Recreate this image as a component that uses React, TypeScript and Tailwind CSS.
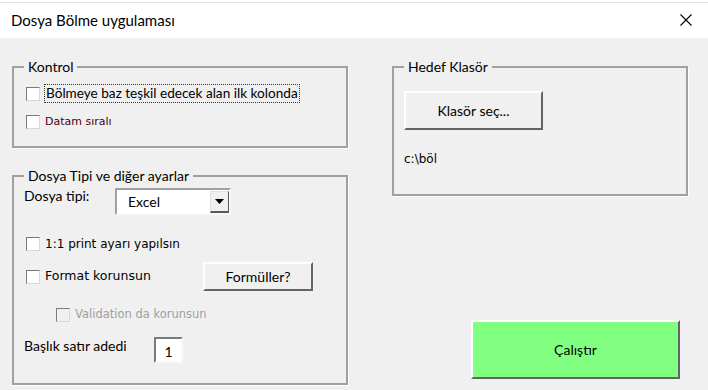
import { ReactNode } from "react";

const seg = { fontFamily: 'Lato, "Noto Sans", sans-serif' };
const tah = { fontFamily: '"DejaVu Sans", "Liberation Sans", sans-serif' };

function Check({
  children,
  disabled,
  className = "",
}: {
  children?: ReactNode;
  disabled?: boolean;
  className?: string;
}) {
  return (
    <label className={`flex items-center gap-[5px] ${className}`}>
      <span
        className={`w-[14px] h-[14px] shrink-0 border border-t-[#7a7a7a] border-l-[#7a7a7a] border-b-[#d8d8d8] border-r-[#d8d8d8] ${
          disabled ? "bg-[#f0f0f0]" : "bg-white"
        }`}
      ></span>
      {children}
    </label>
  );
}

function Frame({
  title,
  className = "",
  children,
}: {
  title: string;
  className?: string;
  children: ReactNode;
}) {
  return (
    <fieldset
      className={`border-2 border-[#a0a0a0] shadow-[1px_1px_0_#fff] pl-[10px] ${className}`}
    >
      <legend className="px-[4px] text-[14px] leading-[18px] text-black" style={seg}>
        {title}
      </legend>
      {children}
    </fieldset>
  );
}

export default function App() {
  return (
    <div className="w-[708px] h-[390px] bg-[#f0f0f0] overflow-hidden text-black">
      <div className="h-[3px] bg-white border-b border-[#e3e3e3]"></div>
      <div className="h-[35px] bg-white flex items-center justify-between pl-[11px] pr-[16px]">
        <span className="text-[15px] leading-none -mt-[1px]" style={seg}>
          Dosya Bölme uygulaması
        </span>
        <svg width="12" height="12" viewBox="0 0 12 12" className="mb-[1px]">
          <path d="M0.5 0.5L11.5 11.5M11.5 0.5L0.5 11.5" stroke="#000" strokeWidth="1.1" />
        </svg>
      </div>

      <div className="flex pl-[12px] pt-[20px]">
        {/* left column */}
        <div className="w-[336px] flex flex-col">
          <Frame title="Kontrol" className="h-[90px] pt-[9px]">
            <Check className="ml-[2px]">
              <span
                className="text-[13.6px] leading-[17px] outline-1 outline-dotted outline-[#333] px-[1px]"
                style={seg}
              >
                Bölmeye baz teşkil edecek alan ilk kolonda
              </span>
            </Check>
            <Check className="mt-[12px] ml-[2px]">
              <span className="text-[11px] text-[#4a0010]" style={tah}>
                Datam sıralı
              </span>
            </Check>
          </Frame>

          <Frame title="Dosya Tipi ve diğer ayarlar" className="mt-[19px] h-[218px]">
            <div className="flex items-start mt-[3px]">
              <span className="text-[14px] leading-[18px] w-[91px] -mt-[1px]" style={seg}>
                Dosya tipi:
              </span>
              <div className="w-[116px] h-[27px] bg-white border-2 border-t-[#a0a0a0] border-l-[#a0a0a0] border-b-[#f8f8f8] border-r-[#f8f8f8] flex items-center">
                <span className="flex-1 pl-[11px] text-[14px]" style={seg}>
                  Excel
                </span>
                <span className="w-[19px] h-[22px] bg-[#f0f0f0] border border-t-[#e0e0e0] border-l-[#e0e0e0] border-b-[#5a5a5a] border-r-[#5a5a5a] border-b-2 flex items-center justify-center">
                  <svg width="9" height="5" viewBox="0 0 9 5">
                    <path d="M0 0H9L4.5 5Z" fill="#000" />
                  </svg>
                </span>
              </div>
            </div>

            <Check className="mt-[20px] ml-[2px]">
              <span className="text-[12px]" style={tah}>
                1:1 print ayarı yapılsın
              </span>
            </Check>

            <div className="flex items-center mt-[9px]">
              <Check className="ml-[2px] w-[177px]">
                <span className="text-[12.5px]" style={tah}>
                  Format korunsun
                </span>
              </Check>
              <button
                className="w-[110px] h-[29px] bg-[#f0f0f0] border-2 border-t-white border-l-white border-b-[#646464] border-r-[#646464] text-[14px]"
                style={seg}
              >
                Formüller?
              </button>
            </div>

            <Check disabled className="mt-[15px] ml-[32px]">
              <span className="text-[11.5px] text-[#a0a0a0]" style={tah}>
                Validation da korunsun
              </span>
            </Check>

            <div className="flex items-start mt-[14px]">
              <span className="text-[14px] leading-[18px] w-[130px]" style={seg}>
                Başlık satır adedi
              </span>
              <div className="w-[29px] h-[26px] bg-white border-2 border-t-[#7a7a7a] border-l-[#7a7a7a] border-b-[#f8f8f8] border-r-[#f8f8f8] flex items-center justify-center text-[14px] pt-[2px]" style={seg}>
                1
              </div>
            </div>
          </Frame>
        </div>

        {/* right column */}
        <div className="ml-[44px] w-[296px] flex flex-col">
          <Frame title="Hedef Klasör" className="h-[138px] pt-[15px]">
            <button
              className="w-[139px] h-[39px] bg-[#f0f0f0] border-2 border-t-white border-l-white border-b-[#646464] border-r-[#646464] text-[14px]"
              style={seg}
            >
              Klasör seç...
            </button>
            <div className="mt-[20px] text-[12px]" style={tah}>
              c:\böl
            </div>
          </Frame>

          <button
            className="ml-[79px] mt-[124px] w-[209px] h-[59px] bg-[#80ff80] border-2 border-t-white border-l-white border-b-[#646464] border-r-[#646464] text-[14px]"
            style={seg}
          >
            Çalıştır
          </button>
        </div>
      </div>
    </div>
  );
}
